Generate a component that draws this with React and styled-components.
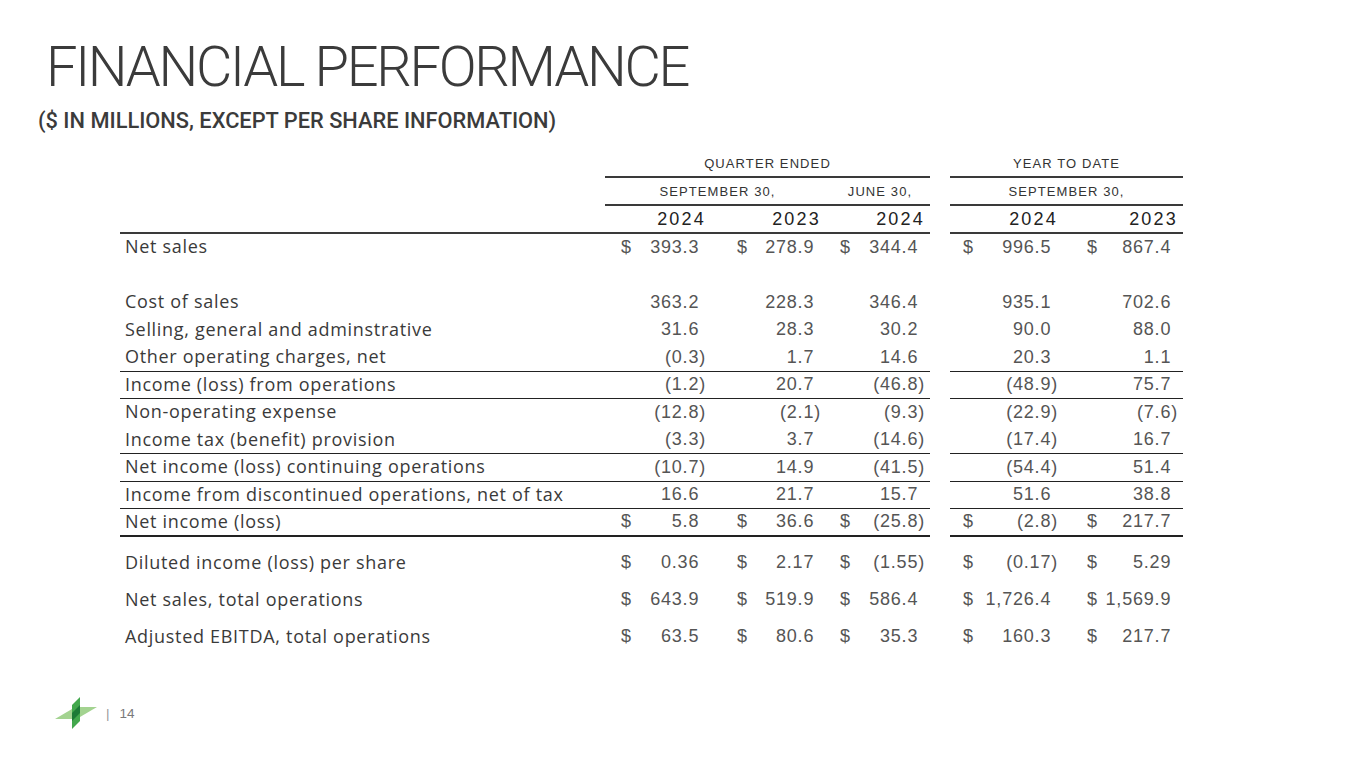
import React from 'react';
import styled, { createGlobalStyle } from 'styled-components';

const columns = [
  { dollarPad: 16, endPad: 5 },
  { dollarPad: 26, endPad: 9 },
  { dollarPad: 10, endPad: 5 },
  { dollarPad: 13, endPad: 10 },
  { dollarPad: 19, endPad: 5 },
];

const rows = [
  { label: 'Net sales', values: ['393.3', '278.9', '344.4', '996.5', '867.4'], dollar: true },
  { label: '', values: ['', '', '', '', ''] },
  { label: 'Cost of sales', values: ['363.2', '228.3', '346.4', '935.1', '702.6'] },
  { label: 'Selling, general and adminstrative', values: ['31.6', '28.3', '30.2', '90.0', '88.0'] },
  { label: 'Other operating charges, net', values: ['(0.3)', '1.7', '14.6', '20.3', '1.1'], rule: 'thin' },
  { label: 'Income (loss) from operations', values: ['(1.2)', '20.7', '(46.8)', '(48.9)', '75.7'], rule: 'thin' },
  { label: 'Non-operating expense', values: ['(12.8)', '(2.1)', '(9.3)', '(22.9)', '(7.6)'] },
  { label: 'Income tax (benefit) provision', values: ['(3.3)', '3.7', '(14.6)', '(17.4)', '16.7'], rule: 'thin' },
  { label: 'Net income (loss) continuing operations', values: ['(10.7)', '14.9', '(41.5)', '(54.4)', '51.4'], rule: 'thin' },
  { label: 'Income from discontinued operations, net of tax', values: ['16.6', '21.7', '15.7', '51.6', '38.8'], rule: 'thin' },
  { label: 'Net income (loss)', values: ['5.8', '36.6', '(25.8)', '(2.8)', '217.7'], dollar: true, rule: 'heavy' },
];

const totals = [
  { label: 'Diluted income (loss) per share', values: ['0.36', '2.17', '(1.55)', '(0.17)', '5.29'] },
  { label: 'Net sales, total operations', values: ['643.9', '519.9', '586.4', '1,726.4', '1,569.9'] },
  { label: 'Adjusted EBITDA, total operations', values: ['63.5', '80.6', '35.3', '160.3', '217.7'] },
];

const years = ['2024', '2023', '2024', '2024', '2023'];

const Value = ({ value }) => {
  const negative = value.endsWith(')');
  return (
    <span>
      {value}
      {!negative && value && <Paren>)</Paren>}
    </span>
  );
};

const Cells = ({ values, dollar, rule, tall }) =>
  values.map((v, i) => (
    <React.Fragment key={i}>
      {i === 3 && <Gap />}
      <NumCell $rule={rule} $tall={tall} $col={columns[i]}>
        <span>{dollar ? '$' : ''}</span>
        <Value value={v} />
      </NumCell>
    </React.Fragment>
  ));

// two stacked green bars with light wings either side
const Logo = () => (
  <svg width="42" height="32" viewBox="0 0 42 32">
    <polygon points="0,22 17,12 17,22" fill="#a3d390" />
    <polygon points="42,10 25,20 25,10" fill="#a3d390" />
    <polygon points="17,8 25,0 25,24 17,32" fill="#43a84d" />
    <polygon points="17,16 25,8 25,16 17,24" fill="#1c7a36" />
  </svg>
);

const App = () => (
  <Slide>
    <GlobalStyle />
    <Title>FINANCIAL PERFORMANCE</Title>
    <Subtitle>($ IN MILLIONS, EXCEPT PER SHARE INFORMATION)</Subtitle>

    <Table>
      <HeadRow>
        <Blank />
        <HeadCell $span={3} $rule>QUARTER ENDED</HeadCell>
        <Gap />
        <HeadCell $span={2} $rule>YEAR TO DATE</HeadCell>
      </HeadRow>
      <HeadRow>
        <Blank />
        <HeadCell $span={2} $rule>SEPTEMBER 30,</HeadCell>
        <HeadCell $rule>JUNE 30,</HeadCell>
        <Gap />
        <HeadCell $span={2} $rule>SEPTEMBER 30,</HeadCell>
      </HeadRow>
      <HeadRow>
        <Blank $rule />
        {years.map((y, i) => (
          <React.Fragment key={i}>
            {i === 3 && <Gap />}
            <YearCell $col={columns[i]}>{y}</YearCell>
          </React.Fragment>
        ))}
      </HeadRow>

      {rows.map((r, i) => (
        <Row key={i}>
          <Label $rule={r.rule}>{r.label}</Label>
          <Cells values={r.values} dollar={r.dollar} rule={r.rule} />
        </Row>
      ))}

      <Spacer />

      {totals.map((r, i) => (
        <Row key={i}>
          <Label $tall>{r.label}</Label>
          <Cells values={r.values} dollar tall />
        </Row>
      ))}
    </Table>

    <Footer>
      <Logo />
      <PageNo>
        <Bar>|</Bar>14
      </PageNo>
    </Footer>
  </Slide>
);

const GlobalStyle = createGlobalStyle`
  body {
    margin: 0;
    background: #ffffff;
  }
`;

const Slide = styled.div`
  width: 1365px;
  height: 768px;
  position: relative;
  overflow: hidden;
  background: #ffffff;
  font-family: 'Open Sans', 'Liberation Sans', sans-serif;
`;

const Title = styled.h1`
  margin: 0;
  padding: 36px 0 0 46px;
  font-family: Roboto, 'Liberation Sans', sans-serif;
  font-weight: 300;
  font-size: 56px;
  line-height: 62px;
  letter-spacing: -2.3px;
  color: #3b3b3b;
`;

const Subtitle = styled.h2`
  margin: 0;
  padding: 8px 0 0 38px;
  font-family: Roboto, 'Liberation Sans', sans-serif;
  font-weight: 500;
  font-size: 21.8px;
  line-height: 30px;
  letter-spacing: 0;
  color: #3b3b3b;
`;

const Table = styled.div`
  margin: 14px 0 0 120px;
  width: 1063px;
`;

const grid = `
  display: grid;
  grid-template-columns: 485px 106px 119px 100px 20px 118px 115px;
`;

const HeadRow = styled.div`
  ${grid}
  height: 28px;
`;

const Row = styled.div`
  ${grid}
`;

const Blank = styled.div`
  border-bottom: ${(p) => (p.$rule ? '2px solid #3a3a3a' : 'none')};
`;

const Gap = styled.div``;

const HeadCell = styled.div`
  grid-column: span ${(p) => p.$span || 1};
  display: flex;
  align-items: center;
  justify-content: center;
  border-bottom: ${(p) => (p.$rule ? '2px solid #3a3a3a' : 'none')};
  font-family: 'Liberation Sans', Arial, sans-serif;
  font-size: 13px;
  letter-spacing: 1.1px;
  color: #333;
`;

const YearCell = styled.div`
  display: flex;
  align-items: center;
  justify-content: flex-end;
  padding-right: ${(p) => p.$col.endPad}px;
  border-bottom: 2px solid #3a3a3a;
  font-family: 'Liberation Sans', Arial, sans-serif;
  font-size: 18px;
  letter-spacing: 2.2px;
  color: #222;
`;

const ruleFor = (rule) =>
  rule === 'heavy' ? '2px solid #222' : rule === 'thin' ? '1px solid #222' : '1px solid transparent';

const Label = styled.div`
  height: ${(p) => (p.$tall ? '37px' : '27.5px')};
  box-sizing: border-box;
  display: flex;
  align-items: center;
  padding: 0 0 2px 5px;
  border-bottom: ${(p) => ruleFor(p.$rule)};
  font-size: 18px;
  letter-spacing: 0.7px;
  color: #3a3a3a;
  white-space: nowrap;
`;

const NumCell = styled.div`
  height: ${(p) => (p.$tall ? '37px' : '27.5px')};
  box-sizing: border-box;
  display: flex;
  align-items: center;
  justify-content: space-between;
  padding: 0 ${(p) => p.$col.endPad}px 0 ${(p) => p.$col.dollarPad}px;
  border-bottom: ${(p) => ruleFor(p.$rule)};
  font-family: 'Liberation Sans', Arial, sans-serif;
  font-size: 18px;
  letter-spacing: 0.8px;
  color: #555;
`;

const Paren = styled.span`
  visibility: hidden;
`;

const Spacer = styled.div`
  height: 8px;
`;

const Footer = styled.div`
  position: absolute;
  left: 55px;
  top: 697px;
  display: flex;
  align-items: center;
  gap: 9px;
`;

const PageNo = styled.div`
  font-family: 'Liberation Sans', Arial, sans-serif;
  font-size: 13.5px;
  color: #7a7a7a;
  display: flex;
  gap: 10px;
`;

const Bar = styled.span`
  color: #9a9a9a;
`;

export default App;
